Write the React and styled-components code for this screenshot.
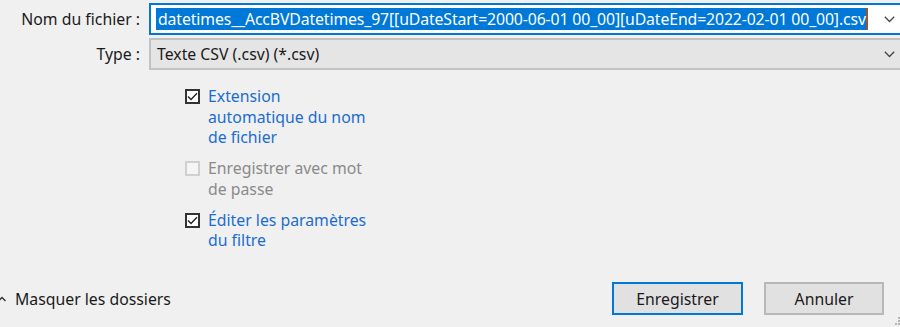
import React from "react";
import styled, { createGlobalStyle } from "styled-components";

const GlobalStyle = createGlobalStyle`
  html, body {
    margin: 0;
    padding: 0;
    background: #f0f0f0;
  }
  body {
    font-family: "Noto Sans", "Open Sans", sans-serif;
  }
`;

const Dialog = styled.div`
  width: 900px;
  height: 327px;
  background: #f0f0f0;
  overflow: hidden;
  display: flex;
  flex-direction: column;
  padding-top: 3px;
  box-sizing: border-box;
  position: relative;
  font-size: 15.8px;
  color: #1a1a1a;
`;

const FieldRow = styled.div`
  display: grid;
  grid-template-columns: 140px 780px;
  column-gap: 9px;
  align-items: center;
  margin-bottom: 3px;
`;

const Label = styled.label`
  text-align: right;
  white-space: nowrap;
`;

const Field = styled.div`
  height: 32px;
  box-sizing: border-box;
  display: flex;
  align-items: center;
  padding-left: ${(p) => (p.$focused ? "5px" : "6px")};
  padding-right: 25px;
  background: ${(p) => (p.$focused ? "#ffffff" : "#e5e5e5")};
  border: ${(p) => (p.$focused ? "2px solid #0078d7" : "2px solid #c2c2c2")};
  position: relative;
`;

const Selected = styled.span`
  background: #0078d7;
  color: #ffffff;
  padding: 1px 0 1px 2px;
  line-height: 20px;
  white-space: nowrap;
  letter-spacing: -0.12px;
  border-right: 2px solid #a0522d;
`;

const Value = styled.span`
  white-space: nowrap;
`;

const Chevron = styled.svg`
  position: absolute;
  left: 733px;
  top: 50%;
  margin-top: -3px;
`;

const Options = styled.div`
  display: flex;
  flex-direction: column;
  gap: 10px;
  margin-top: 13px;
  padding-left: 185px;
`;

const Option = styled.div`
  display: flex;
  align-items: flex-start;
  gap: 8px;
  color: ${(p) => (p.$disabled ? "#8a8a8a" : "#1a6dd0")};
`;

const Box = styled.span`
  flex: none;
  width: 15px;
  height: 15px;
  box-sizing: border-box;
  margin-top: 3px;
  border: 2px solid ${(p) => (p.$disabled ? "#d0d0d0" : "#333333")};
  background: ${(p) => (p.$disabled ? "#f5f5f5" : "#ffffff")};
  display: flex;
  align-items: center;
  justify-content: center;
`;

const OptionText = styled.span`
  width: 162px;
  line-height: 20.7px;
`;

const Footer = styled.div`
  margin-top: auto;
  display: flex;
  align-items: center;
  height: 33px;
  margin-bottom: 12px;
`;

const Toggle = styled.div`
  display: flex;
  align-items: center;
  gap: 9px;
  margin-left: -2px;
`;

const Actions = styled.div`
  margin-left: auto;
  margin-right: 16px;
  display: flex;
  gap: 21px;
`;

const Button = styled.button`
  font: inherit;
  color: #1a1a1a;
  height: 33px;
  width: ${(p) => p.$w}px;
  box-sizing: border-box;
  background: #e1e1e1;
  border: 2px solid ${(p) => (p.$primary ? "#0078d7" : "#b8b8b8")};
  padding: 0;
`;

const Grip = styled.svg`
  position: absolute;
  right: 0;
  bottom: 2px;
`;

const Check = () => (
  <svg width="11" height="9" viewBox="0 0 11 9">
    <path d="M1 4.5 L4 7.5 L10 1.3" fill="none" stroke="#222" strokeWidth="1.4" />
  </svg>
);

const DownArrow = () => (
  <Chevron width="11" height="7" viewBox="0 0 11 7">
    <path d="M0.8 0.8 L5.5 5.5 L10.2 0.8" fill="none" stroke="#444" strokeWidth="1.3" />
  </Chevron>
);

export default function App() {
  return (
    <>
      <GlobalStyle />
      <Dialog>
        <FieldRow>
          <Label>Nom du fichier :</Label>
          <Field $focused>
            <Selected>
              datetimes__AccBVDatetimes_97[[uDateStart=2000-06-01 00_00][uDateEnd=2022-02-01 00_00].csv
            </Selected>
            <DownArrow />
          </Field>
        </FieldRow>
        <FieldRow>
          <Label>Type :</Label>
          <Field>
            <Value>Texte CSV (.csv) (*.csv)</Value>
            <DownArrow />
          </Field>
        </FieldRow>

        <Options>
          <Option>
            <Box><Check /></Box>
            <OptionText>Extension automatique du nom de fichier</OptionText>
          </Option>
          <Option $disabled>
            <Box $disabled />
            <OptionText>Enregistrer avec mot de passe</OptionText>
          </Option>
          <Option>
            <Box><Check /></Box>
            <OptionText>Éditer les paramètres du filtre</OptionText>
          </Option>
        </Options>

        <Footer>
          <Toggle>
            <svg width="8" height="6" viewBox="0 0 8 6">
              <path d="M0.5 5 L4 1.5 L7.5 5" fill="none" stroke="#333" strokeWidth="1.4" />
            </svg>
            <span>Masquer les dossiers</span>
          </Toggle>
          <Actions>
            <Button $primary $w={131}>Enregistrer</Button>
            <Button $w={120}>Annuler</Button>
          </Actions>
        </Footer>

        <Grip width="5" height="8" viewBox="0 0 5 8">
          <rect x="3" y="0" width="2" height="2" fill="#b5b5b5" />
          <rect x="3" y="3" width="2" height="2" fill="#b5b5b5" />
          <rect x="0" y="6" width="2" height="2" fill="#b5b5b5" />
          <rect x="3" y="6" width="2" height="2" fill="#b5b5b5" />
        </Grip>
      </Dialog>
    </>
  );
}
